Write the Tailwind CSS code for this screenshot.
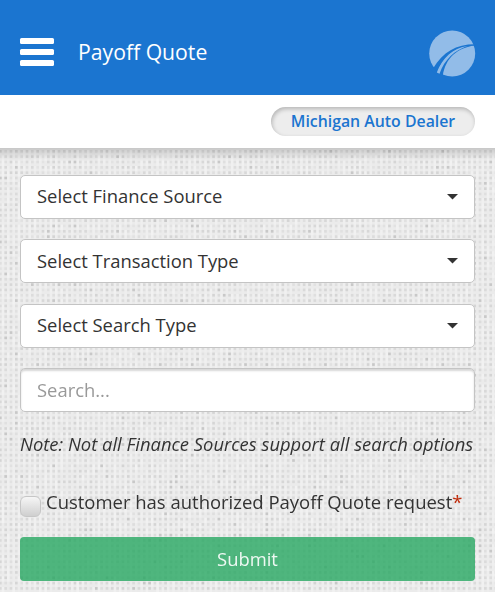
<!DOCTYPE html>
<html lang="en">
<head>
  <meta charset="utf-8">
  <meta name="viewport" content="width=device-width, initial-scale=1">
  <title>Payoff Quote</title>
  <script src="https://cdn.jsdelivr.net/npm/@tailwindcss/browser@4"></script>
</head>
<body class="bg-[#ebebeb] font-['Open_Sans','Noto_Sans',sans-serif] text-[18.4px] text-[#333] overflow-hidden">
  <div class="flex flex-col h-[592px] w-[495px]">
    <header class="flex items-center h-[95px] pl-5 pr-[19px] pt-[10px] bg-[#1b75d0] text-white shrink-0">
      <button type="button" aria-label="Menu" class="flex flex-col gap-[5.4px] w-[34px] mt-[-1px]">
        <span class="h-[5.8px] w-full rounded-[1.5px] bg-white"></span>
        <span class="h-[5.8px] w-full rounded-[1.5px] bg-white"></span>
        <span class="h-[5.8px] w-full rounded-[1.5px] bg-white"></span>
      </button>
      <h1 class="ml-[24px] mb-[2px] text-[21.2px] leading-7 whitespace-nowrap">Payoff Quote</h1>
      <svg class="ml-auto w-[47px] h-[47px] mt-[1px]" viewBox="0 0 47 47">
        <circle cx="23.2" cy="23.5" r="23" fill="#92bce8" />
        <path d="M4 38.5C14 22 27 14.2 46 14.2L47 15.6C25 16 14.5 28 8.5 41.8L4 40Z" fill="#1b75d0" />
        <path d="M4.2 37.6L8.5 42.5L7 45L1 39Z" fill="#1b75d0" />
        <path d="M9.600 43C16 26 28 16 47 15.100C28 18 16.500 28 13.800 46L9.500 45Z" fill="#1b75d0" />
        <path d="M7.800 42.500C13.500 27.500 24 18.500 38 16C26 20.500 15.500 29 10.500 43.700Z" fill="#92bce8" />
      </svg>
    </header>

    <div class="flex justify-end items-center h-[53px] pr-5 bg-white shrink-0">
      <span class="flex items-center h-[29px] w-[204px] justify-center rounded-full bg-[#ededed] text-[15.85px] font-semibold text-[#1b75d0] whitespace-nowrap shadow-[inset_1px_2px_4px_rgba(0,0,0,0.24)]">Michigan Auto Dealer</span>
    </div>

    <main class="relative flex-1 px-5 pt-[26.5px]">
      <canvas id="texture" width="495" height="444" class="absolute left-0 top-0"></canvas>
      <div class="absolute left-0 top-0 w-full h-[12px] bg-linear-to-b from-black/15 to-transparent"></div>

      <form class="relative">
        <div class="flex flex-col gap-[20.6px]">
          <div class="flex items-center justify-between h-[44px] pl-4 pr-4 rounded-[5px] border border-[#c4c4c4] bg-white">
            <span class="pb-[1px]">Select Finance Source</span>
            <svg class="w-[11px] h-[6px]" viewBox="0 0 11 6"><path d="M0 0H11L5.5 5.5Z" fill="#333" /></svg>
          </div>
          <div class="flex items-center justify-between h-[44px] pl-4 pr-4 rounded-[5px] border border-[#c4c4c4] bg-white">
            <span class="pb-[1px]">Select Transaction Type</span>
            <svg class="w-[11px] h-[6px]" viewBox="0 0 11 6"><path d="M0 0H11L5.5 5.5Z" fill="#333" /></svg>
          </div>
          <div class="flex items-center justify-between h-[44px] pl-4 pr-4 rounded-[5px] border border-[#c4c4c4] bg-white">
            <span class="pb-[1px]">Select Search Type</span>
            <svg class="w-[11px] h-[6px]" viewBox="0 0 11 6"><path d="M0 0H11L5.5 5.5Z" fill="#333" /></svg>
          </div>
          <input type="text" placeholder="Search..." class="h-[44px] w-full px-4 pb-[2px] rounded-[5px] border border-[#c4c4c4] bg-white placeholder:text-[#999] shadow-[inset_0_2px_2px_rgba(0,0,0,0.16)]">
        </div>

        <p class="mt-[19px] leading-[26px] italic whitespace-nowrap">Note: Not all Finance Sources support all search options</p>

        <label class="flex items-start mt-[32px] h-[28px] whitespace-nowrap leading-[26px]">
          <span class="mt-[7px] mr-[5px] size-[21px] shrink-0 rounded-[6px] border border-[#c6c6c6] bg-linear-to-b from-[#f6f6f6] to-[#cfcfcf]"></span>
          <span class="text-[18.48px]">Customer has authorized Payoff Quote request<span class="text-[#c02b0a]">*</span></span>
        </label>

        <button type="button" class="mt-[19.5px] h-[44px] w-full rounded-[4px] bg-[#27a762]/80 text-white/90">Submit</button>
      </form>
    </main>
  </div>

  <script>
    // woven dot texture behind the form
    const canvas = document.getElementById("texture");
    const ctx = canvas.getContext("2d");
    let seed = 7;
    const rand = () => {
      seed = (seed * 16807) % 2147483647;
      return seed / 2147483647;
    };
    const step = 5.33;
    for (let y = 2; y < 444; y += step) {
      for (let x = -1; x < 495; x += step) {
        ctx.fillStyle = `rgba(255,255,255,${rand() * 0.35})`;
        ctx.fillRect(x + 2.7, y, 2.6, 5.3);
        const r = rand();
        ctx.fillStyle = `rgba(0,0,0,${r > 0.95 ? 0.15 : 0.03 + r * 0.07})`;
        ctx.fillRect(x, y, 2.7, 2.7);
      }
    }
  </script>
</body>
</html>
